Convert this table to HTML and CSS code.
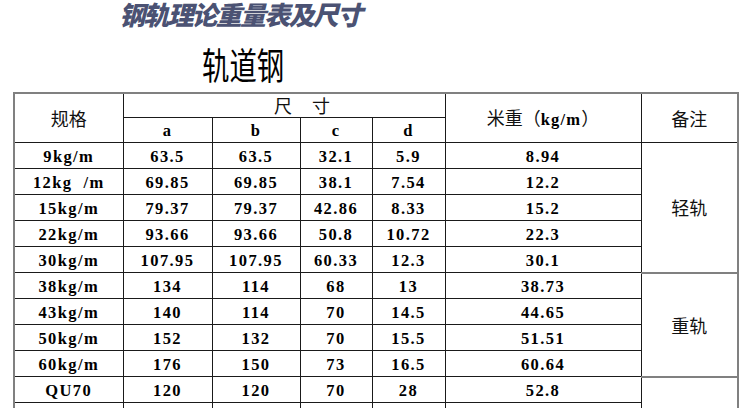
FILE: index.html
```html
<!DOCTYPE html>
<html lang="zh">
<head>
<meta charset="utf-8">
<link rel="stylesheet" href="styles.css">
</head>
<body>
<div class="page">
  <div class="title-main">钢轨理论重量表及尺寸</div>
  <div class="title-sub"><span>轨道钢</span></div>
  <table class="rail">
    <colgroup>
      <col class="c1"><col class="c2"><col class="c3"><col class="c4"><col class="c5"><col class="c6"><col class="c7">
    </colgroup>
    <thead>
      <tr class="h1">
        <th rowspan="2" class="cn">规格</th>
        <th colspan="4" class="cn dim"><span>尺</span><span>寸</span></th>
        <th rowspan="2" class="cn">米重（<b class="en">kg/m</b>）</th>
        <th rowspan="2" class="cn">备注</th>
      </tr>
      <tr class="h2">
        <th class="en">a</th><th class="en">b</th><th class="en">c</th><th class="en">d</th>
      </tr>
    </thead>
    <tbody>
      <tr><td>9kg/m</td><td>63.5</td><td>63.5</td><td>32.1</td><td>5.9</td><td>8.94</td><td rowspan="5" class="cn">轻轨</td></tr>
      <tr><td>12kg&nbsp;&nbsp;/m</td><td>69.85</td><td>69.85</td><td>38.1</td><td>7.54</td><td>12.2</td></tr>
      <tr><td>15kg/m</td><td>79.37</td><td>79.37</td><td>42.86</td><td>8.33</td><td>15.2</td></tr>
      <tr><td>22kg/m</td><td>93.66</td><td>93.66</td><td>50.8</td><td>10.72</td><td>22.3</td></tr>
      <tr><td>30kg/m</td><td>107.95</td><td>107.95</td><td>60.33</td><td>12.3</td><td>30.1</td></tr>
      <tr><td>38kg/m</td><td>134</td><td>114</td><td>68</td><td>13</td><td>38.73</td><td rowspan="4" class="cn">重轨</td></tr>
      <tr><td>43kg/m</td><td>140</td><td>114</td><td>70</td><td>14.5</td><td>44.65</td></tr>
      <tr><td>50kg/m</td><td>152</td><td>132</td><td>70</td><td>15.5</td><td>51.51</td></tr>
      <tr><td>60kg/m</td><td>176</td><td>150</td><td>73</td><td>16.5</td><td>60.64</td></tr>
      <tr><td>QU70</td><td>120</td><td>120</td><td>70</td><td>28</td><td>52.8</td><td rowspan="2" class="cn"></td></tr>
      <tr><td></td><td></td><td></td><td></td><td></td><td></td></tr>
    </tbody>
  </table>
</div>
</body>
</html>
```

FILE: styles.css
```css
html, body {
  margin: 0;
  padding: 0;
  background: #ffffff;
}
body {
  width: 744px;
  height: 408px;
  overflow: hidden;
}
.page {
  width: 744px;
}
.title-main {
  height: 26px;
  line-height: 26px;
  padding-left: 119px;
  padding-top: 1px;
  margin-bottom: -1px;
  font-family: "Noto Sans CJK SC", sans-serif;
  font-weight: 900;
  font-style: italic;
  font-size: 26px;
  letter-spacing: -1.8px;
  color: #4b5273;
  white-space: nowrap;
}
.title-sub {
  margin-top: 20px;
  height: 37px;
  line-height: 37px;
  padding-left: 202px;
}
.title-sub span {
  display: inline-block;
  font-family: "Noto Sans CJK SC", sans-serif;
  font-size: 37px;
  font-weight: 400;
  color: #000;
  transform: scaleX(0.74);
  transform-origin: left center;
  white-space: nowrap;
}
.rail {
  margin-top: 9px;
  margin-left: 13px;
  border-collapse: collapse;
  table-layout: fixed;
  width: 726px;
  border: 2px solid #808080;
}
.c1 { width: 109px; }
.c2 { width: 89px; }
.c3 { width: 88px; }
.c4 { width: 72px; }
.c5 { width: 73px; }
.c6 { width: 196px; }
.c7 { width: 97px; }
.rail th, .rail td {
  border: 1px solid #1a1a1a;
  padding: 0;
  text-align: center;
  vertical-align: middle;
  font-family: "Liberation Serif", "Times New Roman", serif;
  font-weight: bold;
  font-size: 16.5px;
  letter-spacing: 1.4px;
  color: #000;
  white-space: nowrap;
  line-height: 18px;
}
.rail tr.h1 th { height: 23px; }
.rail tr.h2 th { height: 22px; padding-top: 2px; }
.rail tbody td { height: 23px; padding-top: 2px; }
.rail .cn {
  font-family: "Noto Sans CJK SC", sans-serif;
  font-weight: 400;
  font-size: 18px;
  line-height: 22px;
  letter-spacing: 0;
  color: #111;
  padding-top: 0;
}
.rail b.en {
  font-family: "Liberation Serif", serif;
  font-weight: bold;
  font-size: 16.5px;
  letter-spacing: 1.2px;
  color: #000;
}
.rail .dim {
  padding-left: 36px;
  vertical-align: top;
  line-height: 22px;
}
.rail .dim span + span {
  margin-left: 20px;
}
.rail td.cn {
  border-bottom: 2px solid #808080;
}
```
